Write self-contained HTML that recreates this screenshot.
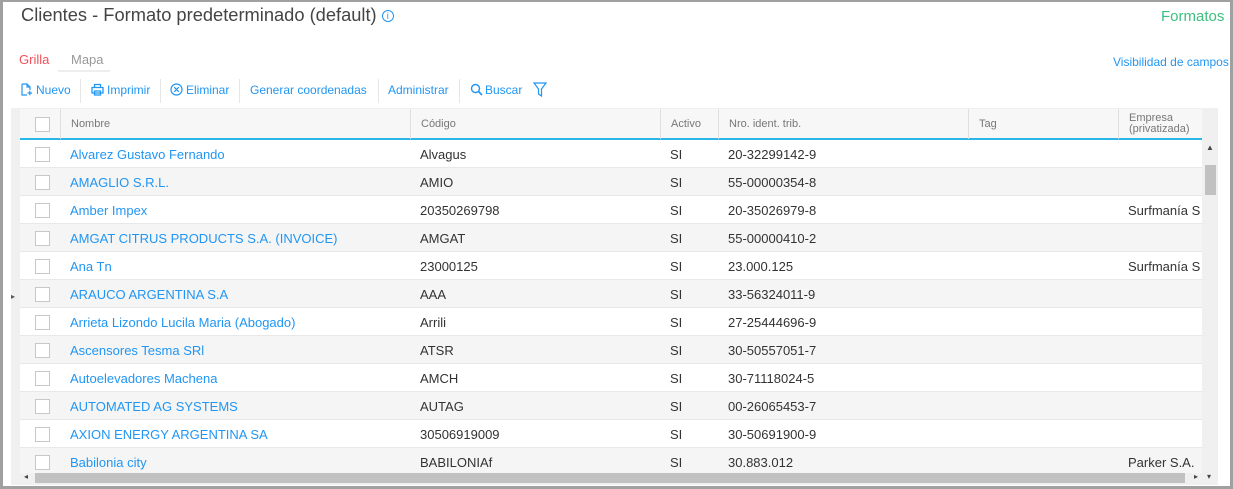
<!DOCTYPE html>
<html><head><meta charset="utf-8"><style>
*{box-sizing:border-box;margin:0;padding:0}
body{width:1233px;height:489px;overflow:hidden;background:#fff;font-family:"Liberation Sans",sans-serif;position:relative}
.frame{position:absolute;left:0;top:0;width:1233px;height:489px;border:3px solid #a0a0a0;border-top-width:2px;z-index:5}
.abs{position:absolute;white-space:nowrap}
.title{left:21px;top:4px;font-size:18.3px;color:#444}
.tb{top:83px;font-size:12px;color:#2196f3}
.ic{position:absolute;top:83px}
.sep{position:absolute;top:79px;width:1px;height:24px;background:#e6e6e6}
.grid{position:absolute;left:11px;top:108px;width:1207px;height:377px;background:#f0f0f0;overflow:hidden}
.hdr{position:absolute;left:9px;top:1px;width:1182px;height:31px;background:#f7f7f7;border-bottom:2px solid #29b6e8}
.hc{position:absolute;top:0;height:30px;border-left:1px solid #e0e0e0;font-size:11px;color:#777;padding:9px 0 0 10px}
.row{position:absolute;left:9px;width:1182px;height:28px;border-bottom:1px solid #e8e8e8;background:#fff}
.row.g{background:#f5f5f5}
.row span{position:absolute;top:7px;font-size:13px;color:#333;white-space:nowrap}
.row span.n{color:#2196f3;left:50px}
.cb{position:absolute;left:15px;top:7px;width:15px;height:15px;border:1px solid #c8c8c8;background:#fff}
</style></head><body>
<div class="frame"></div>
<div class="abs title">Clientes - Formato predeterminado (default) <span style="display:inline-block;width:12px;height:12px;border:1.3px solid #2196f3;border-radius:50%;font-size:9px;color:#2196f3;text-align:center;line-height:10px;vertical-align:2px">i</span></div>
<div class="abs" style="left:1161px;top:8px;font-size:15px;color:#3dbf7f">Formatos</div>
<div class="abs" style="left:19px;top:52px;font-size:13px;color:#f0525c">Grilla</div>
<div class="abs" style="left:71px;top:52px;font-size:13px;color:#999">Mapa</div>
<div class="abs" style="left:58px;top:70px;width:52px;height:2px;background:#eee"></div>
<div class="abs" style="left:1113px;top:55px;font-size:12px;color:#2196f3">Visibilidad de campos</div>
<svg class="ic" style="left:20px" width="13" height="13"><path d="M2 1H7L10 4V7M2 1V12H7M7 1V4H10M7.5 10H12M9.8 7.8V12.2" fill="none" stroke="#2196f3" stroke-width="1.2"/></svg>
<div class="abs tb" style="left:36px">Nuevo</div>
<div class="sep" style="left:80px"></div>
<svg class="ic" style="left:91px" width="13" height="13"><path d="M3.5 4V1.5H9.5V4M1 4.5H12V10H1ZM3.5 8H9.5V12H3.5Z" fill="none" stroke="#2196f3" stroke-width="1.3"/></svg>
<div class="abs tb" style="left:107px">Imprimir</div>
<div class="sep" style="left:160px"></div>
<svg class="ic" style="left:170px" width="13" height="13"><circle cx="6.5" cy="6.5" r="5.5" fill="none" stroke="#2196f3" stroke-width="1.2"/><path d="M4.2 4.2L8.8 8.8M8.8 4.2L4.2 8.8" stroke="#2196f3" stroke-width="1.2"/></svg>
<div class="abs tb" style="left:186px">Eliminar</div>
<div class="sep" style="left:239px"></div>
<div class="abs tb" style="left:250px">Generar coordenadas</div>
<div class="sep" style="left:378px"></div>
<div class="abs tb" style="left:388px">Administrar</div>
<div class="sep" style="left:459px"></div>
<svg class="ic" style="left:470px" width="13" height="13"><circle cx="5.5" cy="5.5" r="4" fill="none" stroke="#2196f3" stroke-width="1.4"/><path d="M8.5 8.5L12 12" stroke="#2196f3" stroke-width="1.6"/></svg>
<div class="abs tb" style="left:485px">Buscar</div>
<svg class="abs" style="left:533px;top:82px" width="14" height="15"><path d="M1 1H13L8.5 7V14L5.5 12V7Z" fill="none" stroke="#2196f3" stroke-width="1.2"/></svg>
<div class="grid">
<div class="hdr">
<div class="cb" style="top:8px"></div>
<div class="hc" style="left:40px;width:350px">Nombre</div>
<div class="hc" style="left:390px;width:250px">Código</div>
<div class="hc" style="left:640px;width:58px">Activo</div>
<div class="hc" style="left:698px;width:250px">Nro. ident. trib.</div>
<div class="hc" style="left:948px;width:150px">Tag</div>
<div class="hc" style="left:1098px;width:84px;padding-top:4px;line-height:11px">Empresa<br>(privatizada)</div>
</div>
<div class="row" style="top:32px"><div class="cb"></div><span class="n">Alvarez Gustavo Fernando</span><span style="left:400px">Alvagus</span><span style="left:650px">SI</span><span style="left:708px">20-32299142-9</span></div>
<div class="row g" style="top:60px"><div class="cb"></div><span class="n">AMAGLIO S.R.L.</span><span style="left:400px">AMIO</span><span style="left:650px">SI</span><span style="left:708px">55-00000354-8</span></div>
<div class="row" style="top:88px"><div class="cb"></div><span class="n">Amber Impex</span><span style="left:400px">20350269798</span><span style="left:650px">SI</span><span style="left:708px">20-35026979-8</span><span style="left:1108px">Surfmanía S</span></div>
<div class="row g" style="top:116px"><div class="cb"></div><span class="n">AMGAT CITRUS PRODUCTS S.A. (INVOICE)</span><span style="left:400px">AMGAT</span><span style="left:650px">SI</span><span style="left:708px">55-00000410-2</span></div>
<div class="row" style="top:144px"><div class="cb"></div><span class="n">Ana Tn</span><span style="left:400px">23000125</span><span style="left:650px">SI</span><span style="left:708px">23.000.125</span><span style="left:1108px">Surfmanía S</span></div>
<div class="row g" style="top:172px"><div class="cb"></div><span class="n">ARAUCO ARGENTINA S.A</span><span style="left:400px">AAA</span><span style="left:650px">SI</span><span style="left:708px">33-56324011-9</span></div>
<div class="row" style="top:200px"><div class="cb"></div><span class="n">Arrieta Lizondo Lucila Maria (Abogado)</span><span style="left:400px">Arrili</span><span style="left:650px">SI</span><span style="left:708px">27-25444696-9</span></div>
<div class="row g" style="top:228px"><div class="cb"></div><span class="n">Ascensores Tesma SRl</span><span style="left:400px">ATSR</span><span style="left:650px">SI</span><span style="left:708px">30-50557051-7</span></div>
<div class="row" style="top:256px"><div class="cb"></div><span class="n">Autoelevadores Machena</span><span style="left:400px">AMCH</span><span style="left:650px">SI</span><span style="left:708px">30-71118024-5</span></div>
<div class="row g" style="top:284px"><div class="cb"></div><span class="n">AUTOMATED AG SYSTEMS</span><span style="left:400px">AUTAG</span><span style="left:650px">SI</span><span style="left:708px">00-26065453-7</span></div>
<div class="row" style="top:312px"><div class="cb"></div><span class="n">AXION ENERGY ARGENTINA SA</span><span style="left:400px">30506919009</span><span style="left:650px">SI</span><span style="left:708px">30-50691900-9</span></div>
<div class="row g" style="top:340px"><div class="cb"></div><span class="n">Babilonia city</span><span style="left:400px">BABILONIAf</span><span style="left:650px">SI</span><span style="left:708px">30.883.012</span><span style="left:1108px">Parker S.A.</span></div>
<div class="abs" style="left:0;top:184px;font-size:8px;color:#555">▸</div>
<div class="abs" style="left:1191px;top:32px;width:16px;height:333px;background:#f0f0f0"></div>
<div class="abs" style="left:1195px;top:35px;font-size:8px;color:#444">▲</div>
<div class="abs" style="left:1194px;top:57px;width:11px;height:30px;background:#c1c1c1"></div>
<div class="abs" style="left:9px;top:365px;width:1182px;height:12px;background:#f0f0f0"></div>
<div class="abs" style="left:24px;top:365px;width:1150px;height:10px;background:#c1c1c1"></div>
<div class="abs" style="left:13px;top:364px;font-size:8px;color:#444">◂</div>
<div class="abs" style="left:1183px;top:364px;font-size:8px;color:#444">▸</div>
<div class="abs" style="left:1196px;top:364px;font-size:8px;color:#444">▾</div>
</div>
</body></html>
